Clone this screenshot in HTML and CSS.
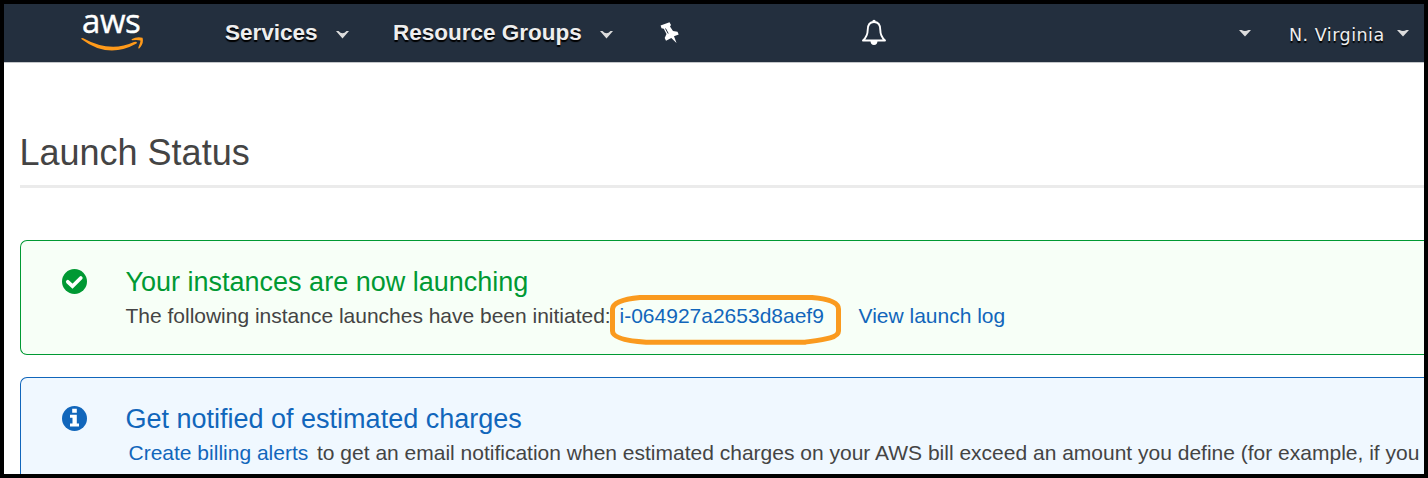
FILE: index.html
```html
<!DOCTYPE html>
<html lang="en">
<head>
<meta charset="utf-8">
<title>Launch Status</title>
<link rel="stylesheet" href="styles.css">
</head>
<body>
<header class="navbar">
  <div class="logo">
    <span class="logo-text">aws</span>
    <svg class="smile" width="64" height="16" viewBox="0 0 64 16"><path d="M.3 2Q0 .5 2.200 1.200Q29 16 53 5Q57 4 55.500 6.500Q27 22.500 .3 2Z" fill="#ff9a1a"/><path d="M50.500 2.200Q56-.8 61.500 .7Q63.200 6 58.200 11.500Q56.700 12 57.700 9.500Q59.800 5 59.300 3.500Q56.500 2.500 51 3.300Z" fill="#ff9a1a"/></svg>
  </div>
  <a class="nav-item services">Services</a>
  <svg class="caret" width="13" height="8" viewBox="0 0 13 8"><path d="M0 0H2.500Q4.500 2.300 6.500 2.300Q8.500 2.300 10.500 0H13L6.500 7.500Z" fill="#dcdcdc"/></svg>
  <a class="nav-item groups">Resource Groups</a>
  <svg class="caret" width="13" height="8" viewBox="0 0 13 8"><path d="M0 0H2.500Q4.500 2.300 6.500 2.300Q8.500 2.300 10.500 0H13L6.500 7.500Z" fill="#dcdcdc"/></svg>
  <svg class="pin" width="20" height="22" viewBox="0 0 20 22"><path d="M.6 3.500L9.500 .2L11 3L10 4.500L13 9L17.500 9.800L18.700 12.500L14 14.300L16.500 21L11.300 15.900L6 18.700L4.700 16L6.500 12L3.800 6.800L1.500 6.200Z" fill="#fff"/><path d="M5.500 6.500L8.200 11.500" stroke="#232f3e" stroke-width="1"/></svg>
  <svg class="bell" width="26" height="28" viewBox="0 0 26 28"><path d="M13 3C8.500 3 6.700 6.500 6.700 11C6.700 16 5 18.700 2 21.500H24C21 18.700 19.300 16 19.300 11C19.300 6.500 17.500 3 13 3Z" fill="none" stroke="#fff" stroke-width="1.900" stroke-linejoin="round"/><path d="M11.500 3V1.500Q13-.2 14.500 1.500V3ZM9.500 22H16.500Q16.300 26 13 26Q9.700 26 9.500 22Z" fill="#fff"/></svg>
  <svg class="caret account" width="12" height="7" viewBox="0 0 12 7"><path d="M0 0H2.500Q6 1.800 9.500 0H12L6 6.500Z" fill="#dcdcdc"/></svg>
  <a class="region">N. Virginia</a>
  <svg class="caret" width="12" height="7" viewBox="0 0 12 7"><path d="M0 0H2.500Q6 1.800 9.500 0H12L6 6.500Z" fill="#dcdcdc"/></svg>
</header>
<main class="content">
  <h1 class="title">Launch Status</h1>
  <section class="alert success">
    <svg class="alert-icon" width="26" height="26" viewBox="0 0 26 26"><circle cx="13.500" cy="13.500" r="12.500" fill="#009933"/><path d="M6.800 13.800L11.500 18.200L19.800 10" fill="none" stroke="#fff" stroke-width="3.700" stroke-linecap="round"/></svg>
    <div class="alert-body">
      <h2 class="alert-title">Your instances are now launching</h2>
      <p class="alert-text"><span class="initiated">The following instance launches have been initiated:</span><a class="link instance">i-064927a2653d8aef9<svg class="marker" width="231" height="50" viewBox="0 0 231 50"><path d="M30 2.500H202C220 4 228.500 8 228.500 14V36C228.500 43 214 44.500 195 47.200H36C18 46 2.500 43 2.500 36V14C3 8 13 4 30 2.500Z" fill="none" stroke="#fa9a1e" stroke-width="5"/></svg></a><a class="link log">View launch log</a></p>
    </div>
  </section>
  <section class="alert info">
    <svg class="alert-icon" width="26" height="26" viewBox="0 0 26 26"><circle cx="13.500" cy="13.500" r="12.500" fill="#1166bb"/><path d="M11.200 3.800H15.800V7.800H11.200ZM9 9.800H15.800V18.500H18V21.500H9V18.500H11.500V12.700H9Z" fill="#fff"/></svg>
    <div class="alert-body">
      <h2 class="alert-title charges">Get notified of estimated charges</h2>
      <p class="alert-text"><a class="link billing">Create billing alerts</a><span class="explain">to get an email notification when estimated charges on your AWS bill exceed an amount you define (for example, if you</span></p>
    </div>
  </section>
</main>
</body>
</html>
```

FILE: styles.css
```css
* { box-sizing: border-box; }
body {
  margin: 0;
  height: 478px;
  border: 4px solid #000;
  overflow: hidden;
  background: #fff;
  color: #444;
  font-family: "Liberation Sans", Arial, sans-serif;
}
.navbar {
  display: flex;
  align-items: center;
  height: 59px;
  background: #232f3e;
  border-bottom: 1px solid #c4c7ca;
  color: #eee;
}
.navbar svg { flex: none; }
.logo { width: 64px; margin-left: 77px; height: 48px; display: flex; flex-direction: column; }
.logo-text {
  font: 500 33px/24px "Open Sans", sans-serif;
  letter-spacing: -0.4px;
  height: 28px;
  padding-left: 1px;
  color: #fff;
  -webkit-text-stroke: 0.4px #fff;
}
.nav-item, .region { white-space: nowrap; text-shadow: 0 2px 1px #000; }
.nav-item { font-size: 22.5px; font-weight: bold; line-height: 26px; }
.services { width: 93px; margin-left: 80px; }
.caret { margin: 3px 0 0 18px; }
.groups { width: 189px; margin-left: 44px; }
.pin { margin-left: 47px; }
.bell { margin-left: 181px; }
.account { margin: 1px 0 0 352px; }
.region { width: 95px; margin-left: 38px; padding-top: 3px; font: 17.500px/22px "DejaVu Sans", sans-serif; letter-spacing: 0.5px; }
.region + .caret { margin: 1px 0 0 13px; }
.content { padding-left: 16px; }
.title {
  margin: 0 0 52px;
  height: 125px;
  padding-top: 69px;
  border-bottom: 3px solid #ebebeb;
  font-size: 36px;
  font-weight: 400;
  line-height: 42px;
  text-indent: -0.5px;
}
.alert {
  display: flex;
  height: 115px;
  padding: 27px 0 0 40px;
  border: 1px solid;
  border-right: 0;
  border-radius: 7px 0 0 7px;
}
.success { border-color: #009933; background: #f7fff7; margin-bottom: 22px; }
.info { border-color: #1166bb; background: #f0f8ff; }
.alert-icon { flex: none; margin: 0 38.500px 0 0; overflow: visible; }
.alert-body { white-space: nowrap; }
.alert-title { margin: 0; font-size: 27px; font-weight: 400; line-height: 29px; }
.success .alert-title { color: #009933; }
.info .alert-title { color: #1166bb; }
.alert-text { display: flex; margin: 7px 0 0; font-size: 21px; line-height: 24px; }
.link { color: #1166bb; }
.initiated { width: 494px; letter-spacing: -0.01px; }
.instance { position: relative; width: 239px; }
.marker { position: absolute; left: -9.500px; top: -9px; }
.billing { width: 188.500px; margin-left: 3px; }
```
